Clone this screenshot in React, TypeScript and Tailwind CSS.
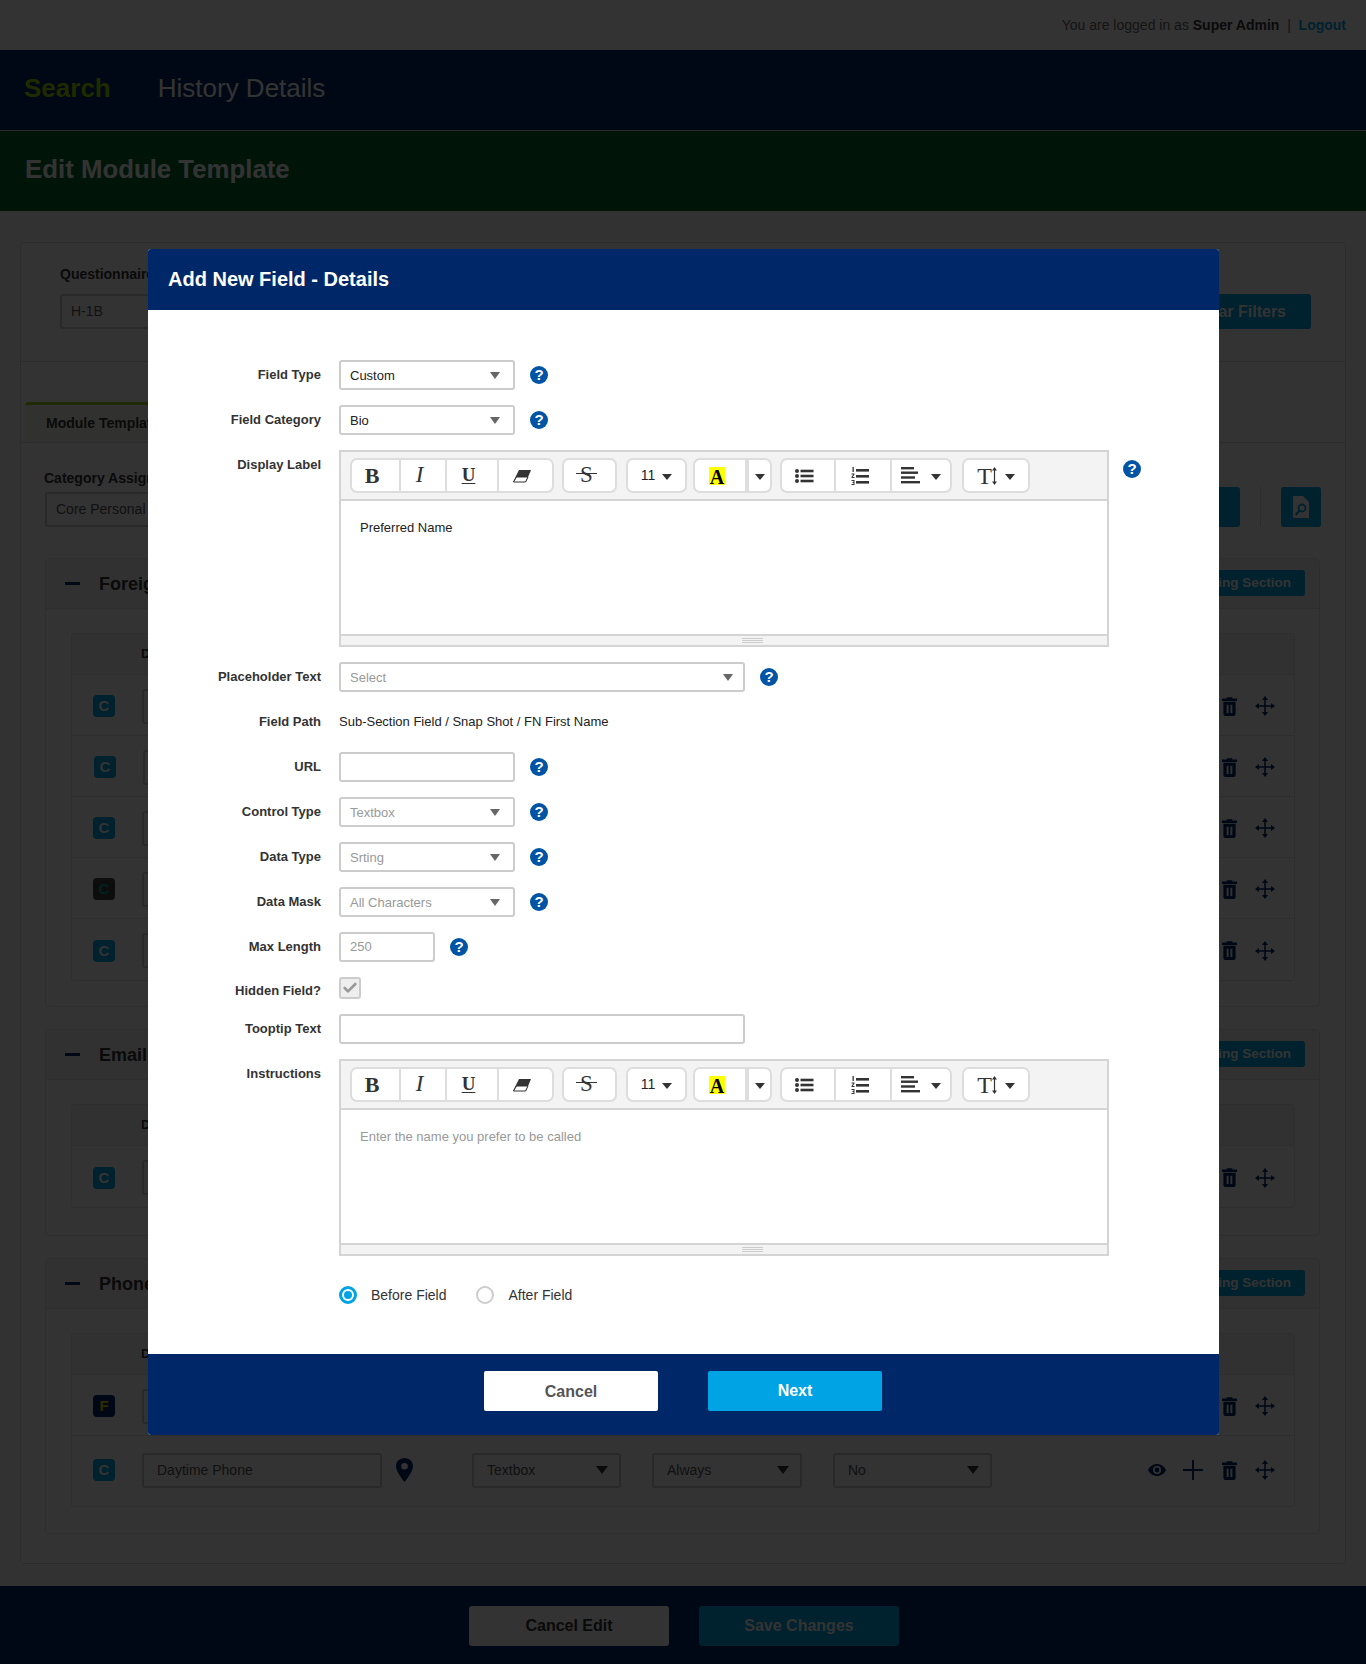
import type { ReactNode } from 'react';
import { Check } from 'lucide-react';

const font = "font-['Liberation_Sans',Arial,sans-serif]";

function Caret({ className = 'border-t-[#666]' }: { className?: string }) {
  return <span className={`inline-block w-0 h-0 border-x-[5px] border-x-transparent border-t-[7px] ${className}`} />;
}

function Help() {
  return (
    <span className="block w-[18px] h-[18px] rounded-full bg-[#0054a6] text-white text-[15px] leading-[18px] font-bold text-center shrink-0">?</span>
  );
}

function Select({ value, wide, muted }: { value: string; wide?: boolean; muted?: boolean }) {
  return (
    <div className={`${wide ? 'w-[406px] pr-[10px]' : 'w-[176px] pr-[13px]'} h-[30px] border-2 border-[#ccc] rounded-[3px] bg-white flex items-center justify-between pl-[9px]`}>
      <span className={`text-[13px] pt-[1px] ${muted ? 'text-[#999]' : 'text-[#222]'}`}>{value}</span>
      <Caret />
    </div>
  );
}

function Field({ label, children, top, labelPad = '' }: { label: string; children: ReactNode; top?: boolean; labelPad?: string }) {
  return (
    <div className={`flex ${top ? 'items-start' : 'items-center'} mb-[15px]`}>
      <label className={`w-[173px] shrink-0 text-right text-[13px] font-bold text-[#333] ${top ? 'pt-[5px]' : ''} ${labelPad}`}>{label}</label>
      <div className="ml-[18px] flex items-center gap-[15px]">{children}</div>
    </div>
  );
}

function Cell({ w, children, last, pad = 'pr-[7px]' }: { w: string; children: ReactNode; last?: boolean; pad?: string }) {
  return <div className={`${w} h-full flex items-center justify-center ${pad} ${last ? '' : 'border-r-2 border-[#ddd]'}`}>{children}</div>;
}

function Group({ className, children }: { className: string; children: ReactNode }) {
  return <div className={`${className} h-[35px] border-2 border-[#ddd] rounded-[7px] bg-white flex items-center overflow-hidden`}>{children}</div>;
}

function SmallCaret() {
  return <span className="inline-block w-0 h-0 mt-[3px] border-x-[5px] border-x-transparent border-t-[6px] border-t-[#333]" />;
}

function Toolbar() {
  const serif = "font-['Liberation_Serif',serif] text-[#333]";
  return (
    <div className="h-[49px] shrink-0 bg-[#f3f3f3] border-b-2 border-[#d4d4d4] pt-[6px] pl-[9px] flex items-start">
      <Group className="w-[204px]">
        <Cell w="w-[49px]"><span className={`${serif} font-bold text-[22px]`}>B</span></Cell>
        <Cell w="w-[46px]"><span className={`${serif} italic text-[23px]`}>I</span></Cell>
        <Cell w="w-[52px]"><span className={`${serif} font-bold text-[19px] underline underline-offset-2`}>U</span></Cell>
        <Cell w="w-[53px]" last>
          <svg width="20" height="14" viewBox="0 0 20 14"><path d="M7 1h12l-5 12H1z" fill="#333" /><path d="M4.500 8h11.500L13.500 13H1.500z" fill="#fff" stroke="#333" /></svg>
        </Cell>
      </Group>
      <Group className="w-[55px] ml-[8px] justify-center pr-[6px]">
        <span className={`${serif} relative text-[23px]`}>
          S
          <span className="absolute left-[-4px] right-[-4px] top-[15px] h-[1px] bg-[#333]" />
        </span>
      </Group>
      <Group className="w-[61px] ml-[9px] justify-center gap-[7px]">
        <span className="text-[14px] text-[#223]">11</span>
        <SmallCaret />
      </Group>
      <Group className="w-[79px] ml-[6px]">
        <div className="w-[54px] h-full flex items-center justify-center pr-[6px] border-r-[4px] border-[#ddd]">
          <span className="w-[16px] h-[18px] bg-[#ff0] text-black font-['Liberation_Serif',serif] font-bold text-[20px] leading-[20px] text-center">A</span>
        </div>
        <div className="flex-1 flex items-center justify-center"><SmallCaret /></div>
      </Group>
      <Group className="w-[172px] ml-[8px]">
        <Cell w="w-[54px]">
          <svg width="19" height="14" viewBox="0 0 19 14" fill="#333"><circle cx="2" cy="2" r="2" /><circle cx="2" cy="7" r="2" /><circle cx="2" cy="12" r="2" /><rect x="5.500" y="0.700" width="13" height="2.600" /><rect x="5.500" y="5.700" width="13" height="2.600" /><rect x="5.500" y="10.700" width="13" height="2.600" /></svg>
        </Cell>
        <Cell w="w-[56px]">
          <svg width="18" height="18" viewBox="0 0 18 18" fill="#333"><rect x="5" y="2" width="13" height="2.600" /><rect x="5" y="8" width="13" height="2.600" /><rect x="5" y="14" width="13" height="2.600" /><path d="M1.500 0h1.300v5H1.500zM.5 6.500h3v1L1.700 10h1.800v1h-3v-1l1.800-2.500H.5zM.5 13h3v5h-3v-1h2v-1h-1v-1h1v-1h-2z" /></svg>
        </Cell>
        <div className="flex-1 flex items-center justify-center gap-[11px]">
          <svg width="19" height="17" viewBox="0 0 19 17" fill="#333"><rect width="13" height="2.400" /><rect y="4.500" width="17" height="2.400" /><rect y="9.300" width="14" height="2.400" /><rect y="14" width="19" height="2.400" /></svg>
          <SmallCaret />
        </div>
      </Group>
      <Group className="w-[68px] ml-[10px] justify-center gap-[8px]">
        <span className="flex items-center">
          <span className={`${serif} text-[24px] leading-[26px]`}>T</span>
          <svg width="5" height="18" viewBox="0 0 5 18" fill="#333"><path d="M2.500 0 5 3.500H3.100v11H5L2.500 18 0 14.500h1.900v-11H0z" /></svg>
        </span>
        <SmallCaret />
      </Group>
    </div>
  );
}

function Editor({ text, muted }: { text: string; muted?: boolean }) {
  return (
    <div className="w-[770px] h-[197px] border-2 border-[#d4d4d4] bg-white flex flex-col">
      <Toolbar />
      <div className={`flex-1 pl-[19px] pt-[19px] text-[13px] leading-[15px] ${muted ? 'text-[#999]' : 'text-[#222]'}`}>{text}</div>
      <div className="h-[11px] shrink-0 bg-[#f3f3f3] border-t-2 border-[#d4d4d4] pl-[56px] flex flex-col items-center justify-center gap-[1px]">
        <span className="w-[21px] h-[1px] bg-[#ccc]" />
        <span className="w-[21px] h-[1px] bg-[#ccc]" />
        <span className="w-[21px] h-[1px] bg-[#ccc]" />
      </div>
    </div>
  );
}

function BackSelect({ w, value, tight }: { w: string; value: string; tight?: boolean }) {
  return (
    <div className={`${w} h-[35px] border-2 border-[#ccc] rounded-[3px] flex items-center justify-between ${tight ? 'pl-[9px]' : 'pl-[13px]'} pr-[11px] text-[14px] text-[#555] shrink-0`}>
      <span>{value}</span>
      <Caret className="border-t-[#333] !border-x-[6px] !border-t-[8px]" />
    </div>
  );
}

function TrashIcon() {
  return (
    <svg width="15" height="19" viewBox="0 0 16 20" fill="currentColor" fillRule="evenodd">
      <path d="M5 0h6v1.500h5V4H0V1.500h5z" />
      <path d="M1.500 5h13v13a2 2 0 0 1-2 2h-9a2 2 0 0 1-2-2zM5 8v9h2V8zM9 8v9h2V8z" />
    </svg>
  );
}

function MoveIcon() {
  return (
    <svg width="20" height="20" viewBox="0 0 20 20" fill="currentColor">
      <rect x="9.250" y="3" width="1.500" height="14" />
      <rect x="3" y="9.250" width="14" height="1.500" />
      <path d="M10 0l3 4H7zM10 20l-3-4h6zM0 10l4-3v6zM20 10l-4 3V7z" />
    </svg>
  );
}

function EyeIcon() {
  return (
    <svg width="18" height="12" viewBox="0 0 18 12" fill="currentColor" fillRule="evenodd">
      <path d="M9 0C5 0 1.600 2.400 0 6c1.600 3.600 5 6 9 6s7.400-2.400 9-6c-1.600-3.600-5-6-9-6zm0 2a4 4 0 1 1 0 8 4 4 0 0 1 0-8zm0 1.600a2.400 2.400 0 1 0 0 4.800 2.400 2.400 0 0 0 0-4.800z" />
    </svg>
  );
}

function PinIcon() {
  return (
    <svg width="17" height="24" viewBox="0 0 17 24" fill="#002868" fillRule="evenodd" className="shrink-0">
      <path d="M8.500 0C3.800 0 0 3.600 0 8.200 0 14 8.500 24 8.500 24S17 14 17 8.200C17 3.600 13.200 0 8.500 0zm0 5a3.300 3.300 0 1 1 0 6.600 3.300 3.300 0 0 1 0-6.600z" />
    </svg>
  );
}

function Row({ badge = 'C', h = 'h-[61px] pt-[2px]', tone = 'blue', label = 'Daytime Phone', last, offset }: { badge?: string; h?: string; tone?: 'blue' | 'black' | 'navy'; label?: string; last?: boolean; offset?: boolean }) {
  const badgeCls = tone === 'blue' ? 'bg-[#00a3e4] text-white' : tone === 'black' ? 'bg-[#444] text-[#00a3a0]' : 'bg-[#002868] text-[#e8d000]';
  return (
    <div className={`${h} flex items-center pl-[21px] pr-[11px] ${last ? '' : 'border-b border-[#e3e3e3]'}`}>
      <span className={`w-[22px] h-[22px] rounded-[4px] text-[15px] font-bold text-center leading-[22px] shrink-0 ${badgeCls} ${offset ? 'ml-[1px]' : ''}`}>{badge}</span>
      <div className="ml-[27px] w-[240px] h-[35px] border-2 border-[#ccc] rounded-[3px] pl-[13px] flex items-center text-[14px] text-[#555] shrink-0">{label}</div>
      <span className="ml-[14px]"><PinIcon /></span>
      <div className="ml-[59px]"><BackSelect w="w-[149px]" value="Textbox" /></div>
      <div className="ml-[31px]"><BackSelect w="w-[150px]" value="Always" /></div>
      <div className="ml-[31px]"><BackSelect w="w-[159px]" value="No" /></div>
      <div className="ml-auto flex items-center text-[#002868]">
        <span className="w-[36px] flex justify-center"><EyeIcon /></span>
        <span className="w-[36px] flex justify-center">
          <svg width="20" height="20" viewBox="0 0 20 20" fill="currentColor"><rect x="9" width="2" height="20" /><rect y="9" width="20" height="2" /></svg>
        </span>
        <span className="w-[36px] flex justify-center"><TrashIcon /></span>
        <span className="w-[36px] flex justify-center"><MoveIcon /></span>
      </div>
    </div>
  );
}

function Section({ title, rows, className }: { title: string; rows: ReactNode; className: string }) {
  return (
    <section className={`border border-[#e3e3e3] rounded-[4px] ${className}`}>
      <div className="h-[50px] bg-[#f5f5f5] border-b border-[#e3e3e3] flex items-center pl-[19px] pr-[14px]">
        <span className="w-[15px] h-[3px] bg-[#002868]" />
        <span className="ml-[19px] text-[18px] font-bold text-[#333] pt-[1px]">{title}</span>
        <button className={`${font} ml-auto mb-[2px] pt-[1px] h-[26px] w-[230px] bg-[#00a3e4] rounded-[3px] text-white text-[13.5px] font-bold text-right pr-[14px]`}>Add Existing Section</button>
      </div>
      <div className="ml-[25px] mr-[24px] mt-[24px] border border-[#e3e3e3] rounded-[3px]">
        <div className="h-[41px] bg-[#f5f5f5] border-b border-[#e3e3e3] flex items-center pl-[69px] text-[13px] font-bold text-[#333]">Display Label</div>
        {rows}
      </div>
    </section>
  );
}

export default function App() {
  return (
    <div className={`${font} relative w-[1366px] h-[1664px] overflow-hidden bg-white`}>
      <header className="h-[50px] flex items-center justify-end pr-[20px] text-[14px] text-[#666]">
        <span>You are logged in as <b className="text-[#333]">Super Admin</b> &nbsp;|&nbsp; <b className="text-[#00a3e4]">Logout</b></span>
      </header>
      <nav className="h-[81px] bg-[#002868] border-b border-[#ddd] flex items-center pl-[24px] pb-[4px]">
        <span className="text-[26px] font-bold text-[#9ad000]">Search</span>
        <span className="ml-[47px] text-[26px] text-white">History Details</span>
      </nav>
      <div className="h-[80px] bg-[#00682c] flex items-center pl-[25px] pb-[4px] text-[25.800px] font-bold text-white">Edit Module Template</div>

      <main className="h-[1375px] pt-[31px] px-[20px] bg-[#f7f7f7]">
        <div className="h-[1322px] border border-[#ddd] rounded-[4px] bg-white">
          <div className="h-[119px] border-b border-[#ddd] pl-[39px] pr-[34px] pt-[21px]">
            <div className="text-[14px] font-bold text-[#333] h-[30px]">Questionnaire</div>
            <div className="flex justify-between">
              <BackSelect w="w-[200px]" value="H-1B" tight />
              <button className={`${font} w-[280px] h-[35px] pt-[1px] bg-[#00a3e4] rounded-[3px] text-white text-[16px] font-bold text-right pr-[25px]`}>Clear Filters</button>
            </div>
          </div>
          <div className="pt-[40px] px-[4px]">
            <div className="w-[250px] h-[40px] bg-[#f4f8e8] border-t-[3px] border-[#9ad000] rounded-t-[4px] pl-[21px] flex items-center text-[14px] font-bold text-[#333]">Module Template</div>
          </div>
          <div className="pt-[24px] pl-[24px] pr-[25px] border-t border-[#ddd]">
            <div className="text-[14px] font-bold text-[#333] h-[22px] leading-[22px] -ml-[1px]">Category Assignment</div>
            <div className="flex items-center h-[35px] mt-[3px]">
              <BackSelect w="w-[300px]" value="Core Personal" tight />
              <div className="ml-auto flex items-center mb-[5px]">
                <button className="w-[100px] h-[40px] bg-[#00a3e4] rounded-[3px]" />
                <span className="w-[1px] h-[40px] bg-[#ddd] mx-[20px]" />
                <span className="w-[40px] h-[40px] bg-[#00a3e4] rounded-[3px] flex items-center justify-center -mr-[1px]">
                  <svg width="16" height="22" viewBox="0 0 16 22" fillRule="evenodd">
                    <path d="M0 0h10l6 6v16H0z" fill="#fff" />
                    <circle cx="9" cy="12" r="3.500" fill="none" stroke="#00a3e4" strokeWidth="1.800" />
                    <path d="M6.500 14.500 2.500 19" stroke="#00a3e4" strokeWidth="2" />
                  </svg>
                </span>
              </div>
            </div>
            <Section
              className="mt-[31px] h-[449px]"
              title="Foreign Name"
              rows={
                <>
                  <Row label="First Name" />
                  <Row label="Middle Name" offset />
                  <Row label="Last Name" />
                  <Row label="Alias" tone="black" />
                  <Row label="Suffix" last />
                </>
              }
            />
            <Section className="mt-[22px] h-[207px]" title="Email" rows={<Row label="Email Address" last />} />
            <Section
              className="mt-[22px] h-[276px]"
              title="Phone"
              rows={
                <>
                  <Row badge="F" tone="navy" label="Mobile Phone" />
                  <Row label="Daytime Phone" h="h-[70px] pb-[2px]" last />
                </>
              }
            />
          </div>
        </div>
      </main>

      <footer className="h-[78px] bg-[#002868] flex justify-center items-start pt-[20px] pl-[2px] gap-[30px]">
        <button className={`${font} w-[200px] h-[40px] bg-white rounded-[3px] text-[#333] text-[16px] font-bold`}>Cancel Edit</button>
        <button className={`${font} w-[200px] h-[40px] bg-[#00a3e4] rounded-[3px] text-white text-[16px] font-bold`}>Save Changes</button>
      </footer>

      {/* modal backdrop */}
      <div className="absolute inset-0 bg-black/80" />

      <div className="absolute left-[148px] top-[249px] w-[1071px] h-[1186px] rounded-[3px] overflow-hidden bg-white flex flex-col">
        <div className="h-[61px] bg-[#002868] flex items-center pl-[20px] pb-[2px] text-[20px] font-bold text-white shrink-0">Add New Field - Details</div>
        <div className="flex-1 pt-[50px]">
          <Field label="Field Type"><Select value="Custom" /><Help /></Field>
          <Field label="Field Category"><Select value="Bio" /><Help /></Field>
          <Field label="Display Label" top>
            <Editor text="Preferred Name" />
            <span className="self-start mt-[10px] -ml-[1px]"><Help /></span>
          </Field>
          <Field label="Placeholder Text"><Select value="Select" wide muted /><Help /></Field>
          <Field label="Field Path"><span className="h-[30px] leading-[30px] text-[13px] text-[#222]">Sub-Section Field / Snap Shot / FN First Name</span></Field>
          <Field label="URL"><div className="w-[176px] h-[30px] border-2 border-[#ccc] rounded-[3px]" /><Help /></Field>
          <Field label="Control Type"><Select value="Textbox" muted /><Help /></Field>
          <Field label="Data Type"><Select value="Srting" muted /><Help /></Field>
          <Field label="Data Mask"><Select value="All Characters" muted /><Help /></Field>
          <Field label="Max Length">
            <div className="w-[96px] h-[30px] border-2 border-[#ccc] rounded-[3px] pl-[9px] flex items-center text-[13px] text-[#999]">250</div>
            <Help />
          </Field>
          <Field label="Hidden Field?" labelPad="h-[22px] leading-[28px]">
            <div className="w-[22px] h-[22px] border-2 border-[#ccc] rounded-[3px] bg-[#eee] flex items-center justify-center text-[#999]"><Check size={16} strokeWidth={4} /></div>
          </Field>
          <Field label="Tooptip Text"><div className="w-[406px] h-[30px] border-2 border-[#ccc] rounded-[3px]" /></Field>
          <Field label="Instructions" top><Editor text="Enter the name you prefer to be called" muted /></Field>
          <div className="ml-[191px] mt-[28px] flex items-center text-[14px] text-[#333]">
            <span className="w-[18px] h-[18px] rounded-full border-[3px] border-[#00a3e4] flex items-center justify-center"><span className="w-[8px] h-[8px] rounded-full bg-[#00a3e4]" /></span>
            <span className="ml-[14px] pt-[1px]">Before Field</span>
            <span className="ml-[30px] w-[18px] h-[18px] rounded-full border-2 border-[#ccc]" />
            <span className="ml-[14px] pt-[1px]">After Field</span>
          </div>
        </div>
        <div className="h-[81px] bg-[#002868] shrink-0 flex justify-center items-start pt-[17px] gap-[50px] pr-[1px]">
          <button className={`${font} w-[174px] h-[40px] bg-white rounded-[2px] text-[#555] text-[16px] font-bold pt-[1px]`}>Cancel</button>
          <button className={`${font} w-[174px] h-[40px] bg-[#00a3e4] rounded-[2px] text-white text-[16px] font-bold`}>Next</button>
        </div>
      </div>
    </div>
  );
}
